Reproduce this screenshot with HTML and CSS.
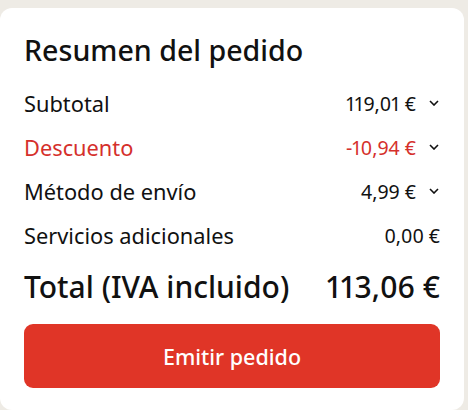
FILE: index.html
```html
<!DOCTYPE html>
<html lang="es">
<head>
<meta charset="utf-8">
<link rel="stylesheet" href="styles.css">
</head>
<body>
<section class="card">
  <h2 class="title">Resumen del pedido</h2>
  <div class="rows">
    <div class="row">
      <span class="label">Subtotal</span>
      <span class="value">119,01 €<svg class="chev" viewBox="0 0 10 6"><path d="M1 1l4 4 4-4"/></svg></span>
    </div>
    <div class="row discount">
      <span class="label">Descuento</span>
      <span class="value">-10,94 €<svg class="chev" viewBox="0 0 10 6"><path d="M1 1l4 4 4-4"/></svg></span>
    </div>
    <div class="row">
      <span class="label">Método de envío</span>
      <span class="value">4,99 €<svg class="chev" viewBox="0 0 10 6"><path d="M1 1l4 4 4-4"/></svg></span>
    </div>
    <div class="row">
      <span class="label">Servicios adicionales</span>
      <span class="value">0,00 €</span>
    </div>
  </div>
  <div class="total">
    <span>Total (IVA incluido)</span>
    <span>113,06 €</span>
  </div>
  <button class="submit">Emitir pedido</button>
</section>
</body>
</html>
```

FILE: styles.css
```css
html, body {
  margin: 0;
  padding: 0;
}
body {
  background: #eeebe5;
  font-family: "Noto Sans", "Open Sans", sans-serif;
  font-variant-numeric: proportional-nums;
  color: #111;
  padding: 8px 4px 0 0;
  height: 410px;
  box-sizing: border-box;
  overflow: hidden;
}
.card {
  background: #fff;
  border-radius: 12px;
  padding: 24px 24px 22px 24px;
  display: flex;
  flex-direction: column;
}
.title {
  margin: 0;
  font-size: 28.6px;
  font-weight: 500;
  line-height: 36px;
  color: #111;
}
.rows {
  margin-top: 13px;
  display: flex;
  flex-direction: column;
}
.row {
  height: 44px;
  display: flex;
  align-items: center;
  justify-content: space-between;
  font-size: 21.8px;
}
.discount {
  color: #d5302c;
}
.value {
  display: flex;
  align-items: center;
  font-size: 19.5px;
}
.chev {
  width: 10px;
  height: 6px;
  margin-left: 13px;
  margin-right: 1px;
  fill: none;
  stroke: #111;
  stroke-width: 1.6;
}
.total {
  margin-top: 7px;
  height: 44px;
  display: flex;
  align-items: center;
  justify-content: space-between;
  font-size: 30px;
  font-weight: 500;
}
.submit {
  margin-top: 16px;
  height: 64px;
  border: none;
  border-radius: 9px;
  background: #e03527;
  color: #fff;
  font-family: inherit;
  font-size: 21.5px;
  font-weight: 500;
}
```
